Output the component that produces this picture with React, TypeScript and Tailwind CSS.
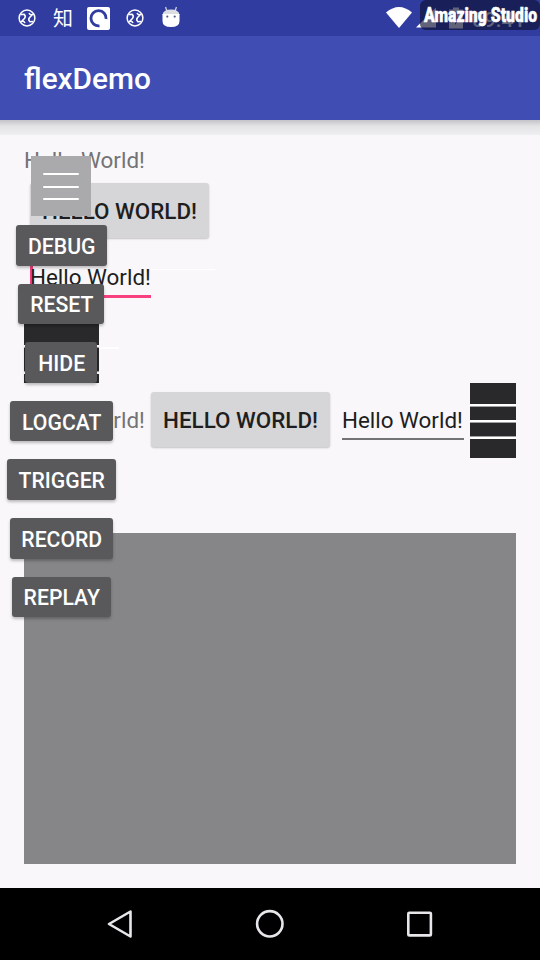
import React from "react";

const ROBOTO = "font-['Roboto','Liberation_Sans',sans-serif]";

function SwirlIcon() {
  return (
    <svg width="18" height="18" viewBox="0 0 18 18" fill="none" stroke="#fff" strokeWidth="1.5">
      <circle cx="9" cy="9" r="7.9" />
      <path d="M2.8 5.6 L6 5.2 Q8.2 7 6.6 9.2 L3.6 12.4 Q6 11.8 7 14" />
      <path d="M15.2 12.4 L12 12.8 Q9.8 11 11.4 8.8 L14.4 5.6 Q12 6.2 11 4" />
    </svg>
  );
}

function StatusBar() {
  return (
    <header className="relative h-9 bg-[#303c9f] text-white">
      <div className="flex h-9 items-center pl-[18px]">
        <SwirlIcon />
        <span className="ml-[17px] w-5 text-[20px] leading-none font-['Noto_Sans_CJK_SC',sans-serif]">知</span>
        <svg className="ml-[14px]" width="23" height="23" viewBox="0 0 23 23">
          <rect width="23" height="23" rx="2" fill="#fff" />
          <path d="M12.5 18.8 A7.6 7.6 0 1 1 19.1 12" fill="none" stroke="#303c9f" strokeWidth="2.8" />
        </svg>
        <span className="ml-[16px]"><SwirlIcon /></span>
        <svg className="ml-[18px] -mt-[2px]" width="18" height="22" viewBox="0 0 18 22">
          <path d="M4.8 5 L3.6 1 M13.2 5 L14.4 1" stroke="#ddd" strokeWidth="1.2" />
          <path d="M0.5 9 Q1 3.5 9 3.5 Q17 3.5 17.5 9 Z" fill="#dcdce4" />
          <path d="M0.5 8 H17.5 V15 Q17.5 21 9 21 Q0.5 21 0.5 15 Z" fill="#fff" />
          <circle cx="5.3" cy="10.6" r="1.1" fill="#555b8b" />
          <circle cx="12.7" cy="10.6" r="1.1" fill="#555b8b" />
        </svg>
        <svg className="ml-[206px]" width="28" height="22" viewBox="0 0 28 22">
          <path d="M0 5.5 Q13 -5.5 26 5.5 L13 21 Z" fill="#fff" />
        </svg>
        <svg className="ml-[1px]" width="22" height="22" viewBox="0 0 22 22">
          <path d="M1 20.5 L21 0.5 V20.5 Z" fill="#fff" />
        </svg>
        <svg className="ml-[11px]" width="16" height="22" viewBox="0 0 16 22">
          <path d="M1 2.5 H5 V0.5 H11 V2.5 H15 V21.5 H1 Z" fill="#fff" />
          <path d="M9 5 L4 13 H7 V18 L12 10.5 H9 Z" fill="#303c9f" />
        </svg>
        <span className="ml-[8px] mt-[4px] text-[21px] leading-none font-medium">09:41</span>
      </div>
      <div className="absolute left-[420px] top-0 h-[30px] w-[120px] rounded-md bg-[#0c1034]/65">
        <span className="absolute left-[4px] top-[5px] origin-left scale-x-[0.81] whitespace-nowrap text-[19.5px] leading-[22px] font-black [-webkit-text-stroke:0.5px_white]">
          Amazing Studio
        </span>
      </div>
    </header>
  );
}

function GreyButton() {
  return (
    <div className="flex h-[55px] w-[179px] items-center justify-center whitespace-nowrap rounded-[3px] bg-[#d6d6d8] pt-[3px] text-[22.4px] font-medium text-[#1e1e20] shadow-[0_1px_2px_rgba(0,0,0,0.22)]">
      HELLO WORLD!
    </div>
  );
}

function MenuBars({ className, gap }: { className: string; gap: string }) {
  return (
    <div className={`flex flex-col bg-[#29292b] ${gap} ${className}`}>
      <div className="h-[3px] bg-[linear-gradient(#fff_66%,#a0a0a2_66%)]" />
      <div className="h-[3px] bg-[linear-gradient(#fff_66%,#a0a0a2_66%)]" />
      <div className="h-[3px] bg-[linear-gradient(#a0a0a2_33%,#fff_33%)]" />
    </div>
  );
}

function DebugButton({ label, width }: { label: string; width: string }) {
  return (
    <div className={`flex h-[40.6px] items-center justify-center rounded-[3px] bg-[#59595b] pt-[3px] pl-px text-[21.2px] font-medium text-white shadow-[0_2px_3px_rgba(0,0,0,0.25)] ${width}`}>
      {label}
    </div>
  );
}

function DebugOverlay() {
  return (
    <div className="absolute left-0 top-[156px] flex w-[122.5px] flex-col items-center">
      <div className="flex h-[60px] w-[60px] flex-col items-center bg-[#aaaaac] pt-[17px]">
        <div className="h-[2px] w-9 rounded-full bg-white" />
        <div className="mt-[11px] h-[2px] w-9 rounded-full bg-white" />
        <div className="mt-[10px] h-[2px] w-9 rounded-full bg-white" />
      </div>
      <div className="mt-[9px] flex flex-col items-center gap-[18px]">
        <DebugButton label="DEBUG" width="w-[91px]" />
        <DebugButton label="RESET" width="w-[86px]" />
        <DebugButton label="HIDE" width="w-[72px]" />
        <DebugButton label="LOGCAT" width="w-[103px]" />
        <DebugButton label="TRIGGER" width="w-[109px]" />
        <DebugButton label="RECORD" width="w-[103px]" />
        <DebugButton label="REPLAY" width="w-[99px]" />
      </div>
    </div>
  );
}

export default function App() {
  return (
    <div className={`relative flex h-[960px] w-[540px] flex-col overflow-hidden bg-[#f9f7fa] ${ROBOTO}`}>
      <StatusBar />
      <div className="flex h-[84px] items-center bg-[#404eb4] pl-6 pt-[2px] text-[29.8px] font-medium text-white">
        flexDemo
      </div>
      <div className="h-[15px] bg-linear-to-b from-[#c4c4c8] via-[#e3e3e6] via-40% to-[#efeff1]" />
      <main className="flex flex-1 flex-col px-6 pt-[11px] text-[22.4px] whitespace-nowrap">
        <div className="h-[28px] leading-[29px] text-[#737375]">Hello World!</div>
        <div className="mt-[9px] ml-[6px]"><GreyButton /></div>
        <div className="mt-[21px] ml-[6px] flex">
          <div className="h-[39px] w-[121px] border-b-[3px] border-[#f8407f] leading-[37px] text-[#1e1e20]">
            <div className="flex items-center">
              <span className="-mr-[3px] h-[30px] w-[3px] shrink-0 bg-[#f8407f]" />
              <span>Hello World!</span>
            </div>
          </div>
          <div className="mt-[10px] h-px w-[64px] bg-white" />
        </div>
        <div className="mt-[10px] flex">
          <MenuBars className="h-[75px] w-[75px] pt-[11px]" gap="gap-[23px]" />
          <div className="mt-[39px] h-[2px] w-[20px] bg-white" />
        </div>
        <div className="flex h-[75px] items-center">
          <span className="w-[121px] text-[#737375]">Hello World!</span>
          <div className="ml-[6px] -mt-[2px]"><GreyButton /></div>
          <div className="ml-[12px] mt-[2px] h-[37px] w-[122px] border-b-2 border-[#737375] leading-[35px] text-[#1e1e20]">Hello World!</div>
          <MenuBars className="ml-[6px] h-[75px] w-[46px] pt-[21px]" gap="gap-[13px]" />
        </div>
        <div className="mt-[75px] h-[331px] bg-[#868688]" />
      </main>
      <nav className="flex h-[72px] items-center bg-black">
        <svg className="ml-[107px]" width="26" height="30" viewBox="0 0 26 30" fill="none" stroke="#e8e6ea" strokeWidth="2.6" strokeLinejoin="round">
          <path d="M2 15 L23.5 2.5 V27.5 Z" />
        </svg>
        <svg className="ml-[122px]" width="30" height="30" viewBox="0 0 30 30" fill="none" stroke="#e8e6ea" strokeWidth="2.6">
          <circle cx="14.8" cy="14.8" r="12.7" />
        </svg>
        <svg className="ml-[121px]" width="27" height="27" viewBox="0 0 27 27" fill="none" stroke="#e8e6ea" strokeWidth="2.6">
          <rect x="2.3" y="1.8" width="22.6" height="22.6" rx="1" />
        </svg>
      </nav>
      <DebugOverlay />
    </div>
  );
}
